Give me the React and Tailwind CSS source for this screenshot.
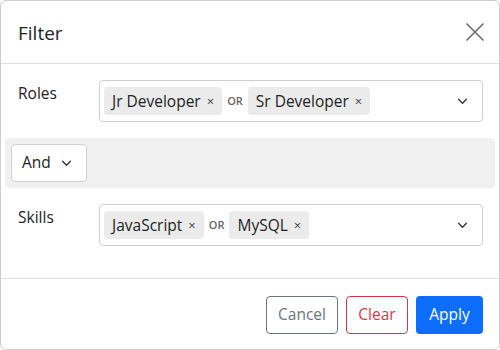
const font = { fontFamily: '"Open Sans", "Noto Sans", sans-serif' };

function Chevron({ className }) {
    return (
        <svg className={className} viewBox="0 0 12 8" fill="none" stroke="#333" strokeWidth="1.5" strokeLinecap="round" strokeLinejoin="round">
            <path d="M1.5 1.5 L6 6 L10.5 1.5" />
        </svg>
    );
}

function Chip({ label }) {
    return (
        <span className="flex items-center h-[28px] pt-[2px] pl-[8px] pr-[8px] rounded-[4px] bg-[#ebebeb] text-[15.5px] text-[#222]">
            {label}
            <span className="ml-[6px] text-[13px] text-[#444]">×</span>
        </span>
    );
}

function MultiSelect({ items }) {
    return (
        <div className="flex-1 h-[42px] border border-[#cfcfcf] rounded-[4px] flex items-center pl-[4px] pr-[14px]">
            <div className="flex items-center gap-[5px]">
                {items.map((it, i) => (
                    <div key={it} className="flex items-center gap-[5px]">
                        {i > 0 && <span className="pt-[1px] text-[11px] font-semibold text-[#666]">OR</span>}
                        <Chip label={it} />
                    </div>
                ))}
            </div>
            <Chevron className="ml-auto w-[11px] h-[7px]" />
        </div>
    );
}

export default function App() {
    return (
        <div className="w-[500px] h-[350px] bg-white" style={font}>
            <div className="h-full border border-[#cdcdcd] rounded-[6px] flex flex-col">
                <div className="h-[63px] shrink-0 border-b border-[#dee2e6] flex items-center justify-between pl-[17px] pr-[15px]">
                    <h2 className="text-[19px] text-[#222] mt-[2px]">Filter</h2>
                    <svg className="w-[18px] h-[18px]" viewBox="0 0 18 18" stroke="#6a6a6a" strokeWidth="1.6" strokeLinecap="round">
                        <path d="M1 1 L17 17 M17 1 L1 17" />
                    </svg>
                </div>

                <div className="flex-1 px-[4px] pt-[16px]">
                    <div className="flex items-start pr-[12px]">
                        <label className="w-[94px] pl-[13px] pt-[2px] text-[15.5px] text-[#222]">Roles</label>
                        <MultiSelect items={["Jr Developer", "Sr Developer"]} />
                    </div>

                    <div className="mt-[16px] h-[50px] bg-[#f0f0f0] rounded-[4px] flex items-center px-[6px]">
                        <button className="w-[76px] h-[38px] bg-white border border-[#cfcfcf] rounded-[4px] flex items-center pl-[10px] gap-[10px] text-[15.5px] text-[#222]">
                            And
                            <Chevron className="w-[11px] h-[7px]" />
                        </button>
                    </div>

                    <div className="mt-[16px] flex items-start pr-[12px]">
                        <label className="w-[94px] pl-[13px] pt-[2px] text-[15.5px] text-[#222]">Skills</label>
                        <MultiSelect items={["JavaScript", "MySQL"]} />
                    </div>
                </div>

                <div className="h-[71px] shrink-0 border-t border-[#dee2e6] flex items-center justify-end gap-[8px] pr-[16px] pt-[1px]">
                    <button className="h-[38px] w-[72px] border border-[#6c757d] rounded-[4px] text-[15.5px] text-[#6c757d]">Cancel</button>
                    <button className="h-[38px] w-[62px] border border-[#dc3545] rounded-[4px] text-[15.5px] text-[#dc3545]">Clear</button>
                    <button className="h-[38px] w-[67px] bg-[#0d6efd] rounded-[4px] text-[15.5px] text-white">Apply</button>
                </div>
            </div>
        </div>
    );
}
